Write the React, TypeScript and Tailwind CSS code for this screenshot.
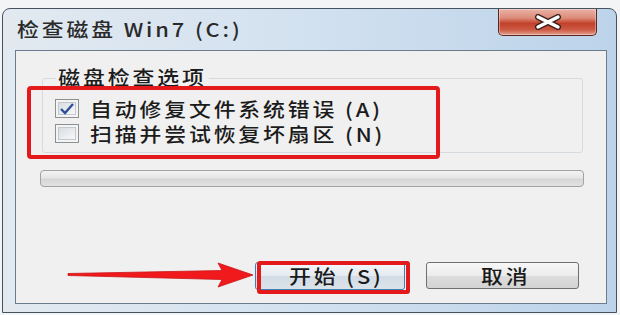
import React from "react";

const font = "font-['Noto_Sans_CJK_SC','Microsoft_YaHei',sans-serif]";
// the reference glyphs are stretched sideways, so text gets a small x scale
const wide = "inline-block origin-left scale-x-[1.15] text-[19px] leading-[24px] tracking-[2.5px] font-medium";

function CloseButton() {
  return (
    <div className="ml-auto mr-[10px] flex h-[27px] w-[99px] items-center justify-center rounded-b-[5px] border border-t-0 border-[#5b2620] bg-[linear-gradient(to_bottom,#eab3a6_0%,#dc8a78_35%,#c3412b_55%,#cc5a44_80%,#e5a090_100%)] shadow-[inset_0_0_0_1px_rgba(255,255,255,0.35)]">
      <svg width="32" height="16" viewBox="0 0 32 16">
        <path d="M6 3 L26 13 M26 3 L6 13" stroke="#3b1f1b" strokeWidth="6" strokeLinecap="round" />
        <path d="M6 3 L26 13 M26 3 L6 13" stroke="#ffffff" strokeWidth="3.4" strokeLinecap="round" />
      </svg>
    </div>
  );
}

function CheckBox({ checked }: { checked?: boolean }) {
  return (
    <div className="flex h-[19px] w-[24px] items-center justify-center border border-[#8e8f8f] bg-[#f4f4f4] p-[2px]">
      <div className="flex h-full w-full items-center justify-center border border-[#c2c8cf] bg-gradient-to-br from-[#d9dde2] to-[#f7f8f9]">
        {checked && (
          <svg width="16" height="12" viewBox="0 0 16 12">
            <path d="M2 6 L6 10 L14 1" fill="none" stroke="#2d4f9a" strokeWidth="2.4" />
          </svg>
        )}
      </div>
    </div>
  );
}

export default function App() {
  return (
    <div className={`relative h-[315px] w-[620px] overflow-hidden bg-[#f3f4f6] pl-[2px] pt-[8px] text-[#1b1b1b] ${font}`}>
      {/* window frame */}
      <div className="flex h-[305px] w-[615px] flex-col rounded-t-[8px] border border-[#46525f] bg-[linear-gradient(to_right,#e2e9f0_0%,#d4e2f0_45%,#bcd3ea_100%)] pl-[12px] pr-[9px] pb-[8px]">
        <div className="flex h-[41px] items-start">
          <span className={`${wide} ml-[2px] mt-[8px] text-[#2a2a2a]`}>检查磁盘 Win7 (C:)</span>
          <CloseButton />
        </div>

        {/* client area */}
        <div className="flex flex-1 flex-col border border-[#6c7c8c] bg-[#f0f0f0]">
          <div className="relative ml-[26px] mr-[23px] mt-[27px] h-[75px] rounded-[3px] border border-[#d5dadf] pl-[12px] pt-[17px]">
            <span className={`${wide} absolute left-[13px] top-[-14px] bg-[#f0f0f0] px-[2px]`}>磁盘检查选项</span>
            <div className="flex h-[25px] items-center gap-[11px]">
              <CheckBox checked />
              <span className={wide}>自动修复文件系统错误 (A)</span>
            </div>
            <div className="flex h-[25px] items-center gap-[11px]">
              <CheckBox />
              <span className={wide}>扫描并尝试恢复坏扇区 (N)</span>
            </div>
          </div>

          <div className="ml-[24px] mr-[22px] mt-[17px] h-[17px] rounded-[4px] border border-[#a2a2a2] bg-[linear-gradient(to_bottom,#f3f3f3_0%,#e6e6e6_45%,#d6d6d6_55%,#e2e2e2_100%)]" />

          <div className="mr-[27px] mt-[75px] flex justify-end gap-[21px]">
            <div className="flex h-[28px] w-[150px] items-center justify-center rounded-[3px] border border-[#3c7fb1] bg-[linear-gradient(to_bottom,#f4f7fa_0%,#e4eaf0_50%,#d3dce5_51%,#dbe3ea_100%)]">
              <span className={`${wide} origin-center`}>开始 (S)</span>
            </div>
            <div className="flex h-[27px] w-[153px] items-center justify-center rounded-[3px] border border-[#707070] bg-[linear-gradient(to_bottom,#f7f7f7_0%,#ececec_50%,#dddddd_51%,#d3d3d3_100%)]">
              <span className={`${wide} origin-center`}>取消</span>
            </div>
          </div>
        </div>
      </div>

      {/* red annotations */}
      <div className="absolute left-[27px] top-[86px] h-[73px] w-[413px] rounded-[4px] border-[4px] border-[#e3191b]" />
      <div className="absolute left-[257px] top-[261px] h-[33px] w-[153px] rounded-[3px] border-[4px] border-[#e3191b]" />
      <svg className="absolute left-[66px] top-[260px]" width="190" height="30" viewBox="0 0 190 30">
        <polygon points="2,13.5 156,10.5 152,3 187,15 152,27 156,19.5 2,15.5" fill="#f0191b" stroke="#c8161a" strokeWidth="0.8" />
      </svg>
    </div>
  );
}
